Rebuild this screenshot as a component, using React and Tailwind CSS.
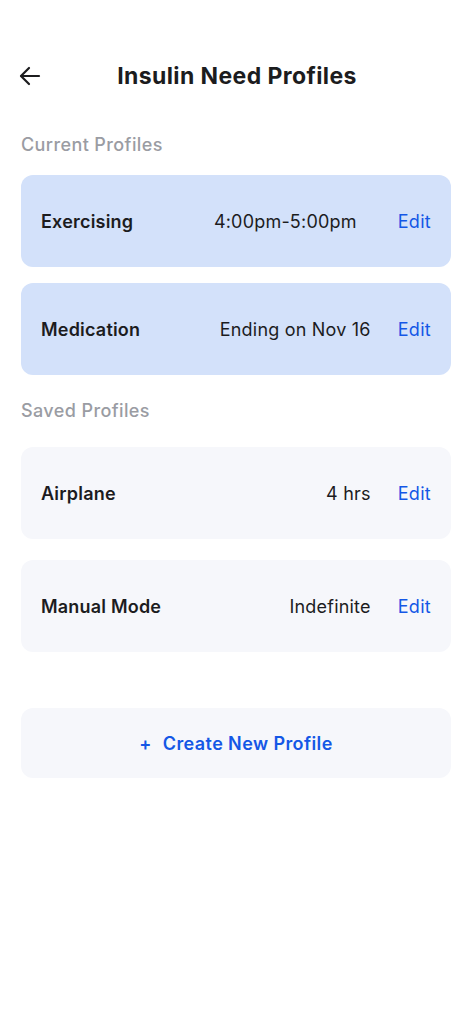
import React from "react";

const font = { fontFamily: "Inter, 'Noto Sans', sans-serif" };

function Card({ name, value, active, extra }) {
  return (
    <div
      className={`flex h-[92px] items-center rounded-[12px] pl-5 pr-5 ${
        active ? "bg-[#d3e1fa]" : "bg-[#f6f7fb]"
      }`}
    >
      <span className="flex-1 text-[18px] font-semibold text-[#1c1c1e] tracking-[0.2px]">{name}</span>
      <span className={`text-[18px] text-[#1c1c1e] tracking-[0.2px] ${extra ? "mr-[14px]" : ""}`}>{value}</span>
      <span className="ml-[27px] text-[18px] text-[#1457e6] tracking-[0.3px]">Edit</span>
    </div>
  );
}

export default function App() {
  return (
    <div className="min-h-[1020px] w-[471px] bg-white pl-[21px] pr-[20px]" style={font}>
      <div className="relative flex h-[94px] items-center justify-center pt-[58px]">
        <svg
          className="absolute left-[-3px] top-[64px]"
          width="24"
          height="24"
          viewBox="0 0 24 24"
          fill="none"
          stroke="#1c1c1e"
          strokeWidth="2.2"
          strokeLinecap="round"
          strokeLinejoin="round"
        >
          <path d="M21 12H3.5" />
          <path d="M11 4l-8 8 8 8" />
        </svg>
        <h1 className="ml-[2px] text-[23px] font-bold text-[#1c1c1e] tracking-[0.4px]">Insulin Need Profiles</h1>
      </div>
      <div className="mt-[40px] text-[18px] font-medium text-[#9a9ca3] tracking-[0.4px] leading-[22px]">
        Current Profiles
      </div>
      <div className="mt-[19px] flex flex-col gap-[16px]">
        <Card name="Exercising" value="4:00pm-5:00pm" active extra />
        <Card name="Medication" value="Ending on Nov 16" active />
      </div>
      <div className="mt-[25px] text-[18px] font-medium text-[#9a9ca3] tracking-[0.4px] leading-[22px]">
        Saved Profiles
      </div>
      <div className="mt-[25px] flex flex-col gap-[21px]">
        <Card name="Airplane" value="4 hrs" />
        <Card name="Manual Mode" value="Indefinite" />
      </div>
      <div className="mt-[56px] flex h-[70px] items-center justify-center rounded-[12px] bg-[#f6f7fb]">
        <span className="text-[18px] font-semibold text-[#1457e6] tracking-[0.4px]">
          <span className="mr-[11px]">+</span>Create New Profile
        </span>
      </div>
    </div>
  );
}
